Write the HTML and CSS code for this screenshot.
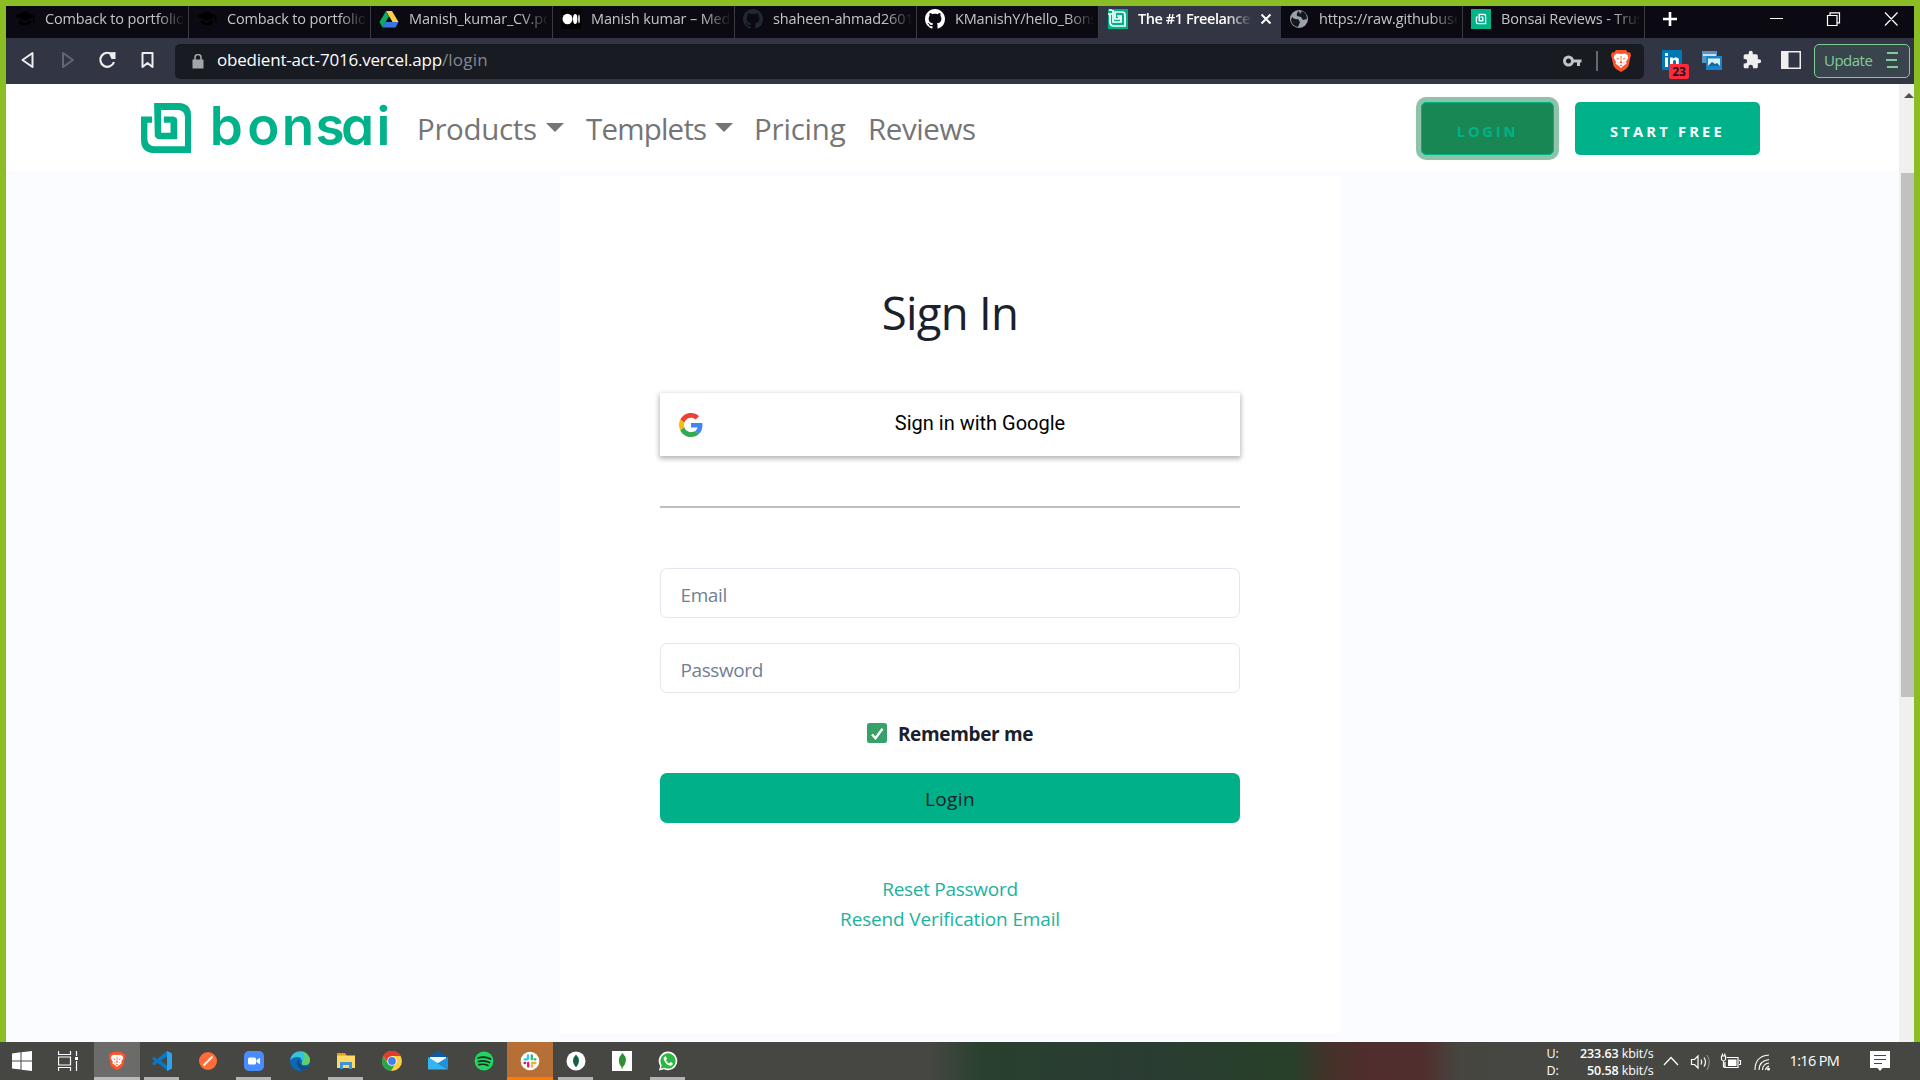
FILE: index.html
```html
<!DOCTYPE html>
<html lang="en">
<head>
<meta charset="utf-8">
<title>Bonsai – Sign In</title>
<link rel="stylesheet" href="styles.css">
</head>
<body>
<svg width="0" height="0" class="defs">
  <symbol id="mark" viewBox="0 0 149 149"><path d="M39 0H113Q149 2 149 36V149H36Q2 147 0 113V40H33V59H19V108Q20 128 40 129H131V42Q130 22 110 21H60V89H88V59H68V40H96Q108 41 108 52V108H55Q41 107 41 94Z"/></symbol>
  <symbol id="cap" viewBox="0 0 20 20"><path d="M10 2 0 7l10 5 8-4v6h1.500V7zM4 11v3q6 5 12 0v-3l-6 3z"/></symbol>
  <symbol id="github" viewBox="0 0 16 16"><path d="M8 0C3.580 0 0 3.580 0 8c0 3.540 2.290 6.530 5.470 7.590.4.070.55-.17.55-.38 0-.19-.01-.82-.01-1.490-2.010.37-2.530-.49-2.690-.94-.09-.23-.48-.94-.82-1.130-.28-.15-.68-.52-.01-.53.63-.01 1.080.58 1.230.82.72 1.210 1.870.87 2.330.66.070-.52.28-.87.51-1.070-1.780-.2-3.640-.89-3.640-3.950 0-.87.31-1.590.82-2.150-.08-.2-.36-1.020.08-2.120 0 0 .67-.21 2.200.82.64-.18 1.320-.27 2-.27s1.360.09 2 .27c1.530-1.040 2.200-.82 2.200-.82.44 1.100.16 1.920.08 2.120.51.56.82 1.270.82 2.150 0 3.070-1.870 3.750-3.650 3.950.29.25.54.73.54 1.480 0 1.070-.01 1.930-.01 2.200 0 .21.15.46.55.38A8.010 8.010 0 0 0 16 8c0-4.420-3.580-8-8-8z"/></symbol>
  <symbol id="brave" viewBox="0 0 20 22"><path fill="#fb542b" d="M5 0h10l2 2.500 2-.2 1 3.200-.7 2-1.800 8.500-2.500 3L10 22l-5-3-2.500-3L.7 7.500 0 5.500l1-3.200 2 .2z"/><path fill="#fff" d="M3.500 5 6 3.500 10 4l4-.5L16.500 5l.8 2.800L15 12l.5 1.800-3 2L10 18l-2.500-2.200-3-2L5 12 2.700 7.800z"/><path fill="#fb542b" d="m5 7.800 3 .8-.5 1.100zm10 0-3 .8.5 1.100zM9.500 6h1l-.2 5.200 1.400 1-1.700 1-1.700-1 1.400-1zM6.500 12l1 1-.6.600zm7 0-1 1 .6.600zM8.500 15.300l1.500-.8 1.500.8-1.500.9z"/></symbol>
</svg>
<div class="screen">
  <div class="browser">
    <div class="tabs">
      <div class="tab"><svg class="fav"><use href="#cap"/></svg><span>Comback to portfolio</span></div>
      <div class="tab"><svg class="fav"><use href="#cap"/></svg><span>Comback to portfolio</span></div>
      <div class="tab"><svg class="fav" viewBox="0 0 20 20"><path fill="#ffcf48" d="M7 2h6l6.500 11h-6z"/><path fill="#11a861" d="M7 2 .5 13l3 5.500L10 7.500z"/><path fill="#3777e3" d="M6.500 13h13l-3 5.500h-13z"/><path fill="#0c0b14" d="m10 7.800 3 5.200H7z"/></svg><span>Manish_kumar_CV.pdf</span></div>
      <div class="tab"><svg class="fav" viewBox="0 0 20 20"><path fill="#000" d="M0 0h20v20H0z"/><g fill="#fff"><ellipse cx="6.500" cy="10" rx="5" ry="5.200"/><ellipse cx="14.200" cy="10" rx="2.200" ry="5"/><ellipse cx="18" cy="10" rx=".8" ry="4.300"/></g></svg><span>Manish kumar – Medium</span></div>
      <div class="tab"><svg class="fav dim"><use href="#github"/></svg><span>shaheen-ahmad2601</span></div>
      <div class="tab"><svg class="fav white"><use href="#github"/></svg><span>KManishY/hello_Bonsai</span></div>
      <div class="tab active"><svg class="fav" viewBox="0 0 20 20"><path fill="#00b289" d="M0 0h20v20H0z"/><path fill="none" stroke="#fff" stroke-width="1.700" d="M0 5h5v8h8V7H9M5 1v4M1 1h3M2 5v8q0 4 4 4h11V6q0-3-3-3H7v7h4V8"/></svg><span>The #1 Freelancer</span><svg class="x" viewBox="0 0 12 12"><path d="m1.500 1.500 9 9m0-9-9 9" stroke="#fff" stroke-width="2"/></svg></div>
      <div class="tab"><svg class="fav" viewBox="0 0 20 20"><circle cx="10" cy="10" r="9" fill="#9ba1a8"/><path fill="#17171f" d="M3 8q3 3 6 2l2 3-2 5q-6-1-7-7zm7-6q-3 2-2 5l4 1 2 3 4-1q0-6-5-8l-2 3z"/></svg><span>https://raw.githubusercontent</span></div>
      <div class="tab"><svg class="fav" viewBox="0 0 20 20"><path fill="#00b488" d="M0 0h20v20H0z"/><use href="#mark" x="4.500" y="4.500" width="11" height="11" fill="#fff"/></svg><span>Bonsai Reviews - Trusted</span></div>
      <svg class="plus" viewBox="0 0 14 14"><path d="M7 0v14M0 7h14" stroke="#fff" stroke-width="2.600"/></svg>
      <svg class="wins" viewBox="0 0 130 14"><path d="M0 6.500h13M57.500 3.500h9.500v10h-9.500zM60 3.500V.8h9.500v10H67M115 .5l12.500 13m0-13L115 13.500" fill="none" stroke="#fff" stroke-width="1.200"/></svg>
    </div>
    <div class="toolbar">
      <svg class="navicons" viewBox="0 0 136 20"><g fill="none" stroke="#eee" stroke-width="2"><path d="M11.500 3v14L1.500 10z" stroke-linejoin="round"/><path stroke="#65676f" d="M42 3v14l10-7z" stroke-linejoin="round"/><path d="M91.500 5A7 7 0 1 0 93 12" stroke-width="2.200"/><path d="M121.500 3h10v14l-5-4-5 4z" stroke-linejoin="round"/></g><path fill="#eee" d="M87.500 2.500 94.500 2v7h-4z"/></svg>
      <div class="url">
        <svg class="lock" viewBox="0 0 12 15"><path fill="#a3a6ab" d="M.5 5.500h11v9H.5z"/><path d="M3 6V3.500a3 3 0 0 1 6 0V6" fill="none" stroke="#a3a6ab" stroke-width="1.600"/></svg>
        <span class="host">obedient-act-7016.vercel.app</span><span class="path">/login</span>
        <svg class="key" viewBox="0 0 19 12"><circle cx="5.500" cy="6" r="4" fill="none" stroke="#c3c5c8" stroke-width="3"/><path fill="#c3c5c8" d="M9 4.500h9.500v3H17V11h-3V7.500H9z"/></svg>
        <i class="bar"></i>
        <svg class="lion"><use href="#brave"/></svg>
      </div>
      <div class="ext"><svg class="e20" viewBox="0 0 20 20"><path fill="#0277b5" d="M0 0h20v20H0z"/><path fill="#fff" d="M3 7.500h3V17H3zM3 3h3v3H3zM8 7.500h2.800v1.300q3-3 6 0V17H14v-6q-1.500-2-3 0v6H8z"/></svg><b class="badge">23</b></div>
      <svg class="e20 pics" viewBox="0 0 20 20"><path fill="#5f93ba" d="M0 1h15v12H0z"/><path fill="#cbe1f2" d="M1 4h13v2H1z"/><path fill="#1685cb" d="M4 6h16v14H4z"/><path fill="#d9eefb" d="M6 8.500h12V16H6z"/><path fill="#1a659d" d="m6 16 4-4 3 2 2-1 3 3z"/></svg>
      <svg class="e20 puzzle" viewBox="0 0 24 24"><path fill="#eee" d="M20.500 11H19V7c0-1.100-.9-2-2-2h-4V3.500a2.500 2.500 0 0 0-5 0V5H4c-1.100 0-2 .9-2 2v3.800h1.500a2.700 2.700 0 0 1 0 5.400H2V20c0 1.100.9 2 2 2h3.800v-1.500a2.700 2.700 0 0 1 5.400 0V22H17c1.100 0 2-.9 2-2v-4h1.500a2.500 2.500 0 0 0 0-5z"/></svg>
      <svg class="e20 panel" viewBox="0 0 20 20"><path fill="#eee" d="M0 1h20v18H0z"/><path fill="#323544" d="M7.500 2.500h11v15h-11z"/></svg>
      <div class="update"><span>Update</span><svg viewBox="0 0 12 18"><path d="M1 2h11M0 9h11M1 16h11" stroke="#80cc99" stroke-width="2"/></svg></div>
    </div>
    <div class="view">
      <div class="page">
        <header>
          <svg class="logo" viewBox="0 0 250 52"><use href="#mark" width="50" height="50"/><text y="41.700" x="68.800 106.200 140.800 174.600 200 235.500">bonsai</text></svg>
          <nav>
            <a class="n1">Products<i></i></a><a class="n2">Templets<i></i></a><a class="n3">Pricing</a><a class="n4">Reviews</a>
          </nav>
          <button class="login">LOGIN</button>
          <button class="free">START FREE</button>
        </header>
        <main>
          <section class="card">
            <h1>Sign In</h1>
            <div class="google"><svg viewBox="0 0 48 48"><path fill="#EA4335" d="M24 9.500c3.540 0 6.710 1.220 9.210 3.600l6.850-6.850C35.900 2.380 30.470 0 24 0 14.620 0 6.510 5.380 2.560 13.220l7.980 6.190C12.430 13.720 17.740 9.500 24 9.500z"/><path fill="#4285F4" d="M46.980 24.550c0-1.570-.15-3.090-.38-4.550H24v9.020h12.940c-.58 2.960-2.260 5.480-4.780 7.180l7.730 6c4.510-4.180 7.090-10.360 7.090-17.650z"/><path fill="#FBBC05" d="M10.530 28.590c-.48-1.450-.76-2.990-.76-4.590s.27-3.140.76-4.590l-7.980-6.190C.92 16.460 0 20.120 0 24c0 3.880.92 7.540 2.560 10.780l7.970-6.190z"/><path fill="#34A853" d="M24 48c6.480 0 11.930-2.130 15.890-5.810l-7.730-6c-2.150 1.450-4.920 2.300-8.160 2.300-6.260 0-11.570-4.220-13.470-9.910l-7.980 6.190C6.510 42.620 14.620 48 24 48z"/></svg><span>Sign in with Google</span></div>
            <hr>
            <div class="field">Email</div>
            <div class="field">Password</div>
            <label class="remember"><svg viewBox="0 0 20 20"><rect width="20" height="20" rx="2.500" fill="#38a169"/><path d="m5 11.500 3.500 3.700 7-9.500" fill="none" stroke="#fff" stroke-width="2.400"/></svg><span>Remember me</span></label>
            <div class="submit">Login</div>
            <div class="links"><a>Reset Password</a><a class="r2">Resend Verification Email</a></div>
          </section>
        </main>
      </div>
      <div class="scroll"><svg viewBox="0 0 10 6"><path fill="#505050" d="M5 0 10 5H0z"/></svg><div class="thumb"></div></div>
    </div>
  </div>
  <div class="taskbar">
    <div class="ti win"><svg viewBox="0 0 20 20"><path fill="#fff" d="m0 2.500 8.500-1.200V9.500H0zM9.500 1.200 20 0v9.500H9.500zM0 10.500h8.500v8L0 17.500zM9.500 10.500H20V20L9.500 18.700z"/></svg></div>
    <div class="ti tv"><svg viewBox="0 0 20 20"><path d="M.5 0v3.500h12V0M.5 6h12v8H.5zM.5 20v-3.500h12V20M18.500 0v5M18.500 10v10" fill="none" stroke="#fff" stroke-width="1.200"/><path fill="#fff" d="M17 6h3v3h-3z"/></svg></div>
    <div class="ti on full"><svg viewBox="0 0 20 20"><use href="#brave" x="1.500" y="0" width="17" height="20"/></svg></div>
    <div class="ti on"><svg viewBox="0 0 20 20"><path fill="#0b78c0" d="M15 0 5.500 8.500 2 5.800.3 6.700V8l12 9L15 20l5-2.500V2.500z"/><path fill="#0b78c0" d="M.3 12v1.300L2 14.200l13-9V0z"/><path fill="#2aa4ee" d="m15 0 5 2.500v15L15 20z"/><path fill="#464742" d="M15 5.500v9L8.800 10z"/></svg></div>
    <div class="ti"><svg viewBox="0 0 20 20"><circle cx="10" cy="10" r="9" fill="#ff6c37"/><path d="m5.500 14.500 9-9M8 12l5-5" stroke="#fff" stroke-width="1.800"/></svg></div>
    <div class="ti on"><svg viewBox="0 0 20 20"><rect width="20" height="20" rx="5" fill="#4a8cff"/><rect x="4" y="6.500" width="8" height="7" rx="1.500" fill="#fff"/><path fill="#fff" d="m12.500 9 3.500-2.300v6.600L12.500 11z"/></svg></div>
    <div class="ti"><svg viewBox="0 0 20 20"><circle cx="10" cy="10" r="10" fill="#0c69b5"/><path fill="#35c1e0" d="M.3 8A10 10 0 0 1 20 9q0 5-5 5-4 0-3-3 0-5-5-5-4 0-6.700 3z"/><path fill="#62d06a" d="M12 .2A10 10 0 0 1 20 10q-1 4-5 4-4 0-3-2 5-5 0-11.800z"/><path fill="#114b91" d="M7 9q-1 8 6 10 4-1 6-4-5 2-8-1t-1-5z"/></svg></div>
    <div class="ti on"><svg viewBox="0 0 20 20"><path fill="#e69f0a" d="M1 2h8l2 3H1z"/><path fill="#ffd966" d="M1 4.500h18V17H1z"/><path fill="#3d96dc" d="M4 18v-7h12v7h-3v-4H7v4z"/></svg></div>
    <div class="ti"><svg viewBox="0 0 20 20"><circle cx="10" cy="10" r="10" fill="#ffcd40"/><path fill="#e33b2e" d="M1.300 5A10 10 0 0 1 18.700 5H10l-4 7z"/><path fill="#2ca24c" d="M1.300 5A10 10 0 0 0 9 20l4.500-7.500H5.700z"/><circle cx="10" cy="10" r="4.800" fill="#fff"/><circle cx="10" cy="10" r="3.900" fill="#3c80ee"/></svg></div>
    <div class="ti"><svg viewBox="0 0 20 20"><path fill="#0c59a4" d="m0 6 10-6 10 6v5H0z"/><path fill="#f2f4f5" d="M2 6h16v6H2z"/><path fill="#32b5f0" d="m0 6 20 12.500H0z"/><path fill="#1c93dd" d="M20 6v12.500L10 12z"/></svg></div>
    <div class="ti"><svg viewBox="0 0 20 20"><circle cx="10" cy="10" r="9.400" fill="#1ed760"/><path d="M4 7q7-2 12.500 1M4.500 10.500q6-1.600 11 1M5 13.700q5-1.200 9 .9" fill="none" stroke="#222" stroke-width="1.700" stroke-linecap="round"/></svg></div>
    <div class="ti slack"><svg viewBox="0 0 20 20"><circle cx="10" cy="10" r="9.300" fill="#fff"/><g stroke-width="2.300" stroke-linecap="round"><path stroke="#36c5f0" d="M8 4.500v3M4.500 8.300h3"/><path stroke="#2eb67d" d="M11.800 4.500v3.800M14.500 8.300h1"/><path stroke="#ecb22e" d="M12 12h3.500M12 14.500v1"/><path stroke="#e01e5a" d="M4.500 12h.8M8.200 12v3.500"/></g></svg></div>
    <div class="ti on"><svg viewBox="0 0 20 20"><circle cx="10" cy="10" r="9.500" fill="#fff"/><path fill="#116149" d="M10 3.500q6 6 0 13-6-7 0-13z"/></svg></div>
    <div class="ti"><svg viewBox="0 0 20 20"><path fill="#fff" d="M0 0h20v20H0z"/><path fill="#2f8f32" d="M10.500 2q7 7 0 14.500V18h-.8v-1.500Q3.500 9 10.500 2z"/></svg></div>
    <div class="ti on"><svg viewBox="0 0 20 20"><path fill="#fff" d="M1 19.500 2.200 15A9.300 9.300 0 1 1 6 18.300z"/><path fill="#2bb741" d="m2.800 17.500.9-3.300A7.600 7.600 0 1 1 6.500 16.700z"/><path fill="#fff" d="M7 5.500q-2 1-1 3.500 2 5 6.500 5.800 2.500-.3 2.300-2.500l-2.300-1.200-1.200 1.300Q9 11.500 8 9.300l1-1.200L8 5.500z"/></svg></div>
    <div class="net"><div><span>U:</span><span><b>233.63</b> kbit/s</span></div><div><span>D:</span><span><b>50.58</b> kbit/s</span></div></div>
    <svg class="tray" viewBox="0 0 110 22"><g fill="none" stroke="#fff" stroke-width="1.200"><path d="m1 14 7-7.500L15 14"/><path d="M28.500 8.500h3L35 5v12l-3.500-3.500h-3zM38 8.500q1.500 2.500 0 5M41 6.500q3 4.500 0 9"/><path d="M44 4q4.500 7 0 15" stroke="#8a8a86"/><path d="M63.500 6.500H75v10H62V11M76 9.500h1.500v4H76M58.500 5v3.500q2 3 4 0V5zM60.500 10v6H63M59.500 2.500V5M61.800 2.500V5"/><path d="M92 19Q92 5 106 4M96 19q0-9 10-10.500M99.500 19q0-6 6.500-7M102.500 19q.5-3 3.500-4" stroke-width="1.100"/></g><path fill="#fff" d="M65 8.500h8.500v6.500H65z"/><circle cx="105.500" cy="18" r="1.500" fill="#fff"/></svg>
    <span class="clock">1:16 PM</span>
    <svg class="note" viewBox="0 0 20 20"><path fill="#fff" d="M0 0h20v17h-7.500L10 20l-2.500-3H0z"/><path d="M4 4.500h12M4 8.500h12M4 12.500h8" stroke="#464742" stroke-width="1.200"/></svg>
  </div>
</div>
</body>
</html>
```
FILE: styles.css
```css
*{box-sizing:border-box}
body{margin:0;font-family:"Open Sans","Noto Sans",sans-serif;color:#1a202c;overflow:hidden}
.defs{position:absolute}
svg{display:block;flex:none}
.screen{width:1920px;height:1080px;display:flex;flex-direction:column}
.browser{height:1042px;border:6px solid #8bbe25;border-bottom:0;display:flex;flex-direction:column}

.tabs{height:32px;background:#0b0a13;display:flex;padding-left:1px}
.tab{width:182px;height:32px;padding:3px 0 0 8px;display:flex;align-items:flex-start;gap:10px;border-right:1px solid #3b3c42;font-size:14.500px;line-height:20px;letter-spacing:-.15px;color:#c4c4c8}
.tab span{width:138px;overflow:hidden;white-space:nowrap;-webkit-mask-image:linear-gradient(90deg,#000 112px,transparent 140px);mask-image:linear-gradient(90deg,#000 112px,transparent 140px)}
.tab.active{background:#323544;color:#fff;font-weight:600;letter-spacing:-.43px;border:0;padding-left:9px}
.tab.active span{width:114px;-webkit-mask-image:linear-gradient(90deg,#000 88px,transparent 114px);mask-image:linear-gradient(90deg,#000 88px,transparent 114px)}
.fav{width:20px;height:20px;fill:#000}
.fav.dim{fill:#202830}
.fav.white{fill:#fff}
.x{width:12px;height:12px;margin:4px 0 0 -2px}
.plus{width:14px;height:14px;margin:6px 0 0 18px}
.wins{width:130px;height:14px;margin:6px 0 0 93px}

.toolbar{height:46px;background:#323544;display:flex;align-items:center}
.navicons{width:136px;height:20px;margin:-2px 0 0 15px}
.url{width:1469px;height:35px;margin:0 18px 0 18px;border-radius:5px;background:#181b22;display:flex;align-items:center;font-size:17px;line-height:32px;white-space:nowrap}
.lock{width:12px;height:15px;margin:0 13.500px 0 16.500px}
.host,.path{padding-bottom:2px}
.host{color:#fff;letter-spacing:-.2px}
.path{color:#85888f;letter-spacing:.2px}
.key{width:19px;height:12px;margin-left:auto}
.bar{width:2px;height:20px;background:#66686d;margin:0 13px 0 14px}
.lion{width:20px;height:22px;margin-right:13px}
.ext{position:relative}
.e20{width:20px;height:20px}
.ext .e20{margin-top:-2px}
.badge{position:absolute;left:7px;top:12px;width:20px;height:15px;border-radius:2px;background:#ff2938;color:#1c1420;font-size:12px;line-height:15px;text-align:center}
.pics{margin:-2px 0 0 20px}
.puzzle{margin:-2px 0 0 20px}
.panel{margin:-2px 0 0 19px}
.update{margin-left:13px;width:96px;height:34px;margin-top:-1px;border:1px solid #80cc99;border-radius:5px;background:#3a444d;color:#80cc99;font-size:15px;letter-spacing:-.5px;display:flex;align-items:center;justify-content:space-between;padding:0 11px 2px 9px}
.update svg{width:12px;height:18px}

.view{flex:1;display:flex;min-height:0}
.page{width:1893px;background:#fbfcff;display:flex;flex-direction:column}
header{height:87px;background:#fff;display:flex;align-items:center;padding:0 139px 0 135px}
.logo{width:250px;height:52px;fill:#00b289;margin-top:2px}
.logo text{font:600 53px Inter,sans-serif;font-feature-settings:"cv11"}
nav{margin:2px 0 0 26px;display:grid;grid-template-columns:169px 168px 114px 120px;font-size:29.500px;line-height:40px;color:#757575;white-space:nowrap}
nav a{display:flex;align-items:center}
nav i{border:9px solid transparent;border-top-color:#757575;border-bottom:0;margin:-3px 0 0 9px}
.n1{letter-spacing:-.35px}
.n2{letter-spacing:-.8px}
.n3{letter-spacing:-.2px}
.n4{letter-spacing:-.4px}
button{height:53px;margin-top:2px;border:0;border-radius:5px;background:#00b289;color:#fff;font:700 14.700px "Open Sans",sans-serif;padding:5px 0 0;text-align:center}
.login{width:133px;margin-left:auto;background:#198754;color:#00b289;border:1.500px solid #00b289;box-shadow:0 0 0 5px #8cc3a9;letter-spacing:2.800px}
.free{width:185px;margin-left:21px;letter-spacing:3.200px}
main{flex:1;padding:5px 559px 9px 554px;display:flex}
.card{flex:1;background:#fff;padding:105.500px 100px 0;display:flex;flex-direction:column}
h1{margin:0 0 51.500px;font-size:45.500px;line-height:60px;font-weight:400;letter-spacing:-.7px;text-align:center}
.google{height:63px;border-radius:1px;box-shadow:0 2px 5px 1px rgba(0,0,0,.28);display:flex;align-items:center;padding:0 19px;font:20px Roboto,sans-serif;color:#000}
.google svg{width:24px;height:24px;margin-top:1px}
.google span{flex:1;text-align:center;padding:0 0 3px 36px}
hr{width:100%;margin:50px 0 60px;border:0;height:2px;background:#bfbfbf}
.field{height:50px;margin-bottom:25px;border:1px solid #e2e8f0;border-radius:7px;padding:2px 19.500px 0;font-size:19px;line-height:48px;letter-spacing:-.4px;color:#718096}
.remember{height:30px;display:flex;align-items:center;justify-content:center;gap:11px;font-size:19px;line-height:30px;font-weight:700;letter-spacing:-.35px}
.remember svg{width:20px;height:20px}
.remember span{padding-top:2px}
.submit{height:50px;margin-top:25px;border-radius:7px;background:#00b088;font-size:19px;line-height:53px;font-weight:500;letter-spacing:.4px;text-align:center}
.links{margin-top:51px;display:flex;flex-direction:column;align-items:center;font-size:19px;line-height:30px;letter-spacing:-.28px;color:#20b2a0}
.r2{letter-spacing:-.15px}
.scroll{width:15px;background:#f0f0f0;padding:9px 0 0 2px}
.scroll svg{width:10px;height:6px;margin-left:3px}
.thumb{height:524px;margin-top:74px;background:#c1c1c1}

.taskbar{height:38px;display:flex;align-items:stretch;color:#fff;background:linear-gradient(90deg,#464742 930px,#28402e 983px,#2a3c33 1134px,#284029 1291px,#443229 1328px,#512d2d 1370px,#502e2d 1422px,#464540 1459px,#464742 1500px)}
.ti{width:46px;display:flex;justify-content:center;padding-top:9px}
.ti svg{width:20px;height:20px}
.win{width:44px}
.tv{width:49.500px;padding-right:1px}
.tv+.ti{margin-right:-1px}
.on{background:linear-gradient(#b4b4b3,#b4b4b3) 50% 100%/35px 3px no-repeat}
.full{background:linear-gradient(#bababa,#bababa) 0 100%/100% 3px no-repeat #6b6b69}
.slack{background:linear-gradient(#ff7a00,#ff7a00) 0 100%/100% 3px no-repeat #b56f37}
.net{width:107px;margin-left:856px;padding-top:3px;font-size:12.500px;line-height:17px;letter-spacing:-.1px}
.net div{display:flex;justify-content:space-between}
.net b{font-weight:600}
.tray{width:110px;height:22px;margin:9px 0 0 9px}
.clock{width:52px;margin-left:17px;font-size:14.500px;line-height:38px;letter-spacing:-.65px;white-space:nowrap}
.note{width:20px;height:20px;margin:9px 0 0 28px}
```
